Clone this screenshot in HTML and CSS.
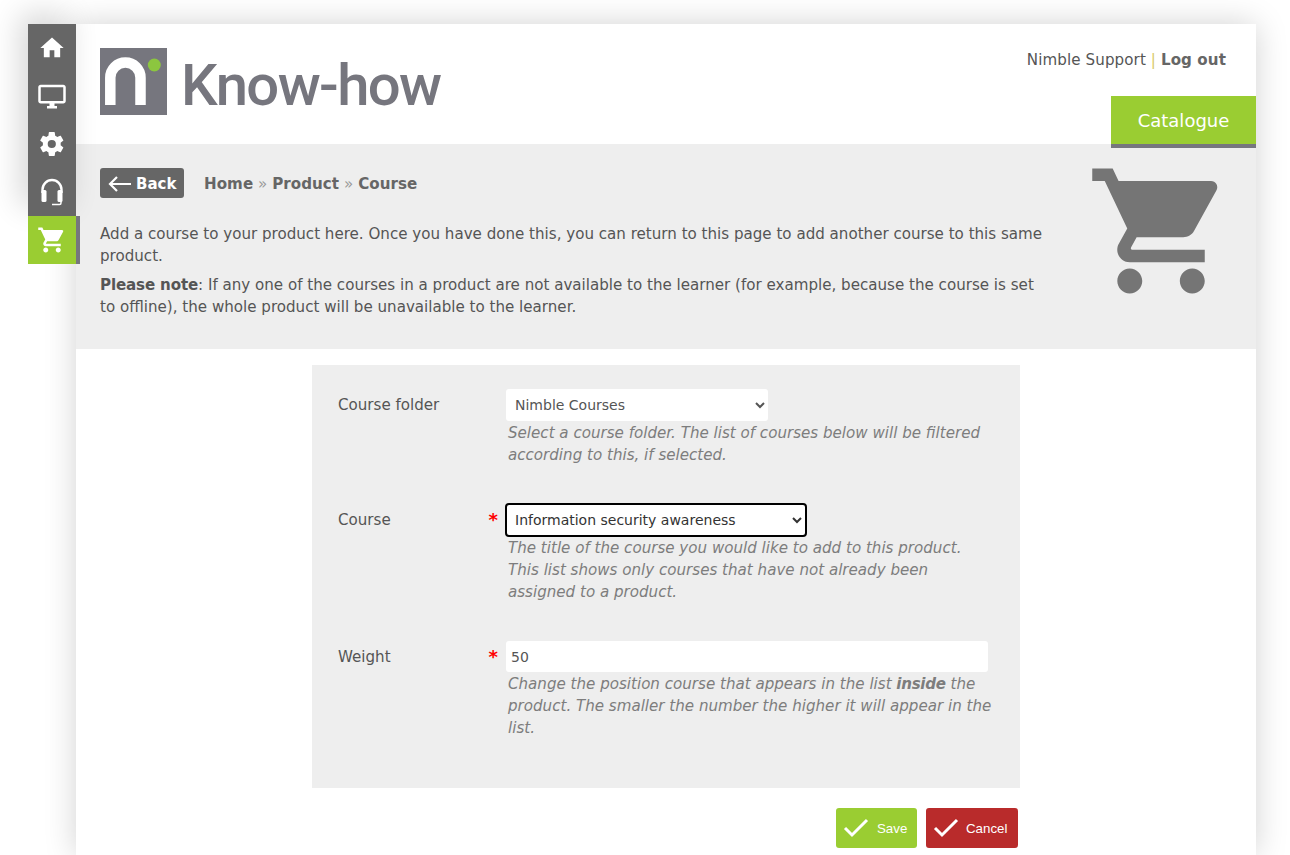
FILE: index.html
```html
<!DOCTYPE html>
<html lang="en">
<head>
<meta charset="utf-8">
<title>Know-how</title>
<link rel="stylesheet" href="styles.css">
</head>
<body>
<div class="shell">
  <nav class="side">
    <div class="side-group">
      <a class="side-item"><svg width="28" height="28" viewBox="0 0 24 24"><path fill="#fff" d="M10 20v-6h4v6h5v-8h3L12 3 2 12h3v8z"/></svg></a>
      <a class="side-item"><svg width="30" height="30" viewBox="0 0 24 24"><path fill="#fff" d="M21 3H3c-1.100 0-2 .9-2 2v11c0 1.100.9 2 2 2h7v2H8v2h8v-2h-2v-2h7c1.100 0 2-.9 2-2V5c0-1.100-.9-2-2-2zm0 13H3V5h18z"/></svg></a>
      <a class="side-item"><svg width="28" height="28" viewBox="0 0 24 24"><path fill="#fff" d="M19.400 13c.04-.32.06-.66.06-1s-.02-.68-.07-1l2.160-1.680c.19-.15.240-.42.120-.64l-2.040-3.540c-.12-.22-.38-.3-.62-.22l-2.540 1.020c-.53-.4-1.100-.74-1.720-1l-.38-2.700A.5.5 0 0 0 13.860 1.800H9.780a.5.5 0 0 0-.5.430L8.900 4.940c-.62.26-1.200.6-1.720 1L4.640 4.920c-.23-.09-.5 0-.62.22L1.980 8.680c-.13.220-.07.490.12.640L4.260 11c-.05.320-.08.670-.08 1s.02.680.07 1l-2.150 1.680c-.19.150-.240.420-.12.640l2.040 3.540c.12.220.380.300.620.220l2.540-1.020c.53.400 1.100.74 1.720 1l.38 2.700c.05.250.25.430.5.430h4.080c.25 0 .46-.18.500-.43l.38-2.700c.62-.26 1.200-.6 1.720-1l2.540 1.020c.23.090.5 0 .62-.22l2.040-3.540c.12-.22.070-.49-.12-.64zM11.820 15.500a3.500 3.500 0 1 1 0-7 3.500 3.500 0 0 1 0 7z"/></svg></a>
      <a class="side-item"><svg width="24" height="30" viewBox="0 0 24 30"><path fill="none" stroke="#fff" stroke-width="2.400" d="M2.500 16v-3.500a9.500 9.500 0 0 1 19 0V16"/><rect x="1.500" y="13" width="5" height="12" rx="1.500" fill="#fff"/><rect x="17.500" y="13" width="5" height="12" rx="1.500" fill="#fff"/><path fill="none" stroke="#fff" stroke-width="1.500" d="M21 24v2a1.500 1.500 0 0 1-1.500 1.500H12"/></svg></a>
    </div>
    <a class="side-item side-active"><svg width="30" height="30" viewBox="0 0 24 24"><path fill="#fff" d="M7 18c-1.100 0-1.990.9-1.990 2S5.900 22 7 22s2-.9 2-2-.9-2-2-2zM1 2v2h2l3.600 7.590-1.350 2.450c-.16.280-.25.610-.25.960 0 1.100.9 2 2 2h12v-2H7.420c-.14 0-.25-.11-.25-.25l.03-.12.9-1.630h7.450c.75 0 1.410-.41 1.750-1.030l3.580-6.490A1 1 0 0 0 20 4H5.210l-.94-2zm16 16c-1.100 0-1.990.9-1.990 2s.89 2 1.990 2 2-.9 2-2-.9-2-2-2z"/></svg></a>
  </nav>
  <div class="page">
    <header class="top">
      <div class="logo">
        <svg class="logo-mark" width="67" height="67" viewBox="0 0 67 67"><rect width="67" height="67" fill="#76767e"/><path fill="none" stroke="#fff" stroke-width="10.500" d="M10.300 57V29.700a15.100 15.100 0 0 1 30.200 0V57"/><circle cx="54.300" cy="17" r="6.500" fill="#8cc63f"/></svg>
        <span class="logo-text">Know-how</span>
      </div>
      <div class="top-right">
        <div class="user-links">Nimble Support <span class="sep">|</span> <b>Log out</b></div>
        <div class="tab">Catalogue</div>
      </div>
    </header>
    <section class="hero">
      <div class="hero-text">
        <div class="crumbs">
          <a class="back"><svg width="24" height="16" viewBox="0 0 24 16"><path fill="none" stroke="#fff" stroke-width="2.200" d="M23 8H2M9 1 2 8l7 7"/></svg>Back</a>
          <span class="trail"><b>Home</b> <i>»</i> <b>Product</b> <i>»</i> <b>Course</b></span>
        </div>
        <p>Add a course to your product here. Once you have done this, you can return to this page to add another course to this same product.</p>
        <p><b class="note">Please note</b>: If any one of the courses in a product are not available to the learner (for example, because the course is set to offline), the whole product will be unavailable to the learner.</p>
      </div>
      <svg class="hero-cart" width="150" height="150" viewBox="0 0 24 24"><path fill="#757575" d="M7 18c-1.100 0-1.990.9-1.990 2S5.900 22 7 22s2-.9 2-2-.9-2-2-2zM1 2v2h2l3.600 7.590-1.350 2.450c-.16.280-.25.610-.25.960 0 1.100.9 2 2 2h12v-2H7.420c-.14 0-.25-.11-.25-.25l.03-.12.9-1.630h7.450c.75 0 1.410-.41 1.750-1.030l3.580-6.490A1 1 0 0 0 20 4H5.210l-.94-2zm16 16c-1.100 0-1.990.9-1.990 2s.89 2 1.990 2 2-.9 2-2-.9-2-2-2z"/></svg>
    </section>
    <main class="content">
      <form class="panel">
        <div class="field">
          <label class="lbl">Course folder</label>
          <div class="ctrl">
            <select class="input sel-folder"><option>Nimble Courses</option></select>
            <div class="help">Select a course folder. The list of courses below will be filtered according to this, if selected.</div>
          </div>
        </div>
        <div class="field">
          <label class="lbl">Course<span class="req">*</span></label>
          <div class="ctrl">
            <select class="input sel-course"><option>Information security awareness</option></select>
            <div class="help">The title of the course you would like to add to this product. This list shows only courses that have not already been assigned to a product.</div>
          </div>
        </div>
        <div class="field">
          <label class="lbl">Weight<span class="req">*</span></label>
          <div class="ctrl">
            <input class="input txt" type="text" value="50">
            <div class="help">Change the position course that appears in the list <b>inside</b> the product. The smaller the number the higher it will appear in the list.</div>
          </div>
        </div>
      </form>
      <div class="actions">
        <a class="btn btn-save"><svg width="26" height="20" viewBox="0 0 26 20"><path fill="none" stroke="#fff" stroke-width="3" d="M2 10l7 7L24 2"/></svg>Save</a>
        <a class="btn btn-cancel"><svg width="26" height="20" viewBox="0 0 26 20"><path fill="none" stroke="#fff" stroke-width="3" d="M2 10l7 7L24 2"/></svg>Cancel</a>
      </div>
    </main>
  </div>
</div>
</body>
</html>
```
FILE: styles.css
```css
* { box-sizing: border-box; }
html, body { margin: 0; height: 855px; overflow: hidden; background: #fff; }
body { font-family: "DejaVu Sans", Verdana, sans-serif; font-size: 15.100px; color: #555; }
.shell { display: flex; align-items: flex-start; margin: 24px 0 0 28px; }
.side { width: 48px; flex: none; position: relative; z-index: 2; }
.side-group { background: #666; box-shadow: -8px -10px 30px rgba(0,0,0,.16); }
.side-item { display: flex; align-items: center; justify-content: center; height: 48px; }
.side-active { background: #9acd32; width: 52px; border-right: 4px solid #76767e; position: relative; }
.page { width: 1180px; height: 831px; background: #fff; box-shadow: 0 0 30px rgba(0,0,0,.18); }
.top { height: 120px; display: flex; justify-content: space-between; background: #fff; }
.logo { display: flex; align-items: center; gap: 14px; padding: 24px 0 29px 24px; height: 120px; }
.logo-mark { flex: none; }
.logo-text { font-family: Roboto, sans-serif; font-size: 58px; color: #76767e; font-weight: 500; letter-spacing: -1.600px; line-height: 67px; position: relative; top: 4px; }
.top-right { display: flex; flex-direction: column; align-items: flex-end; }
.user-links { margin: 26px 30px 0 0; line-height: 20px; letter-spacing: .1px; }
.user-links b { color: #666; }
.sep { color: #d8c96a; }
.tab { margin-top: 26px; width: 145px; height: 52px; line-height: 50px; text-align: center; background: #9acd32; border-bottom: 4px solid #76767e; color: #fff; font-size: 18px; position: relative; z-index: 1; }
.hero { height: 205px; background: #eee; padding: 24px 24px 0 24px; display: flex; justify-content: space-between; align-items: flex-start; }
.hero-text { width: 948px; }
.hero p { margin: 0 0 7px; line-height: 22px; }
.note { letter-spacing: -.15px; }
.crumbs { display: flex; align-items: center; gap: 20px; height: 30px; margin-bottom: 25px; }
.back { display: flex; align-items: center; gap: 4px; height: 30px; width: 84px; padding-left: 8px; padding-top: 1px; background: #666; border-radius: 3px; color: #fff; font-weight: bold; font-size: 15px; }
.trail { padding-top: 2px; letter-spacing: .05px; color: #666; }
.trail i { font-style: normal; color: #999; }
.hero-cart { margin: -12px -4px 0 0; }
.content { padding: 16px 0 0 236px; }
.panel { width: 708px; height: 423px; background: #eee; padding: 24px 26px; }
.field { display: flex; margin-bottom: 38px; }
.lbl { width: 168px; flex: none; position: relative; line-height: 32px; }
.req { position: absolute; right: 8px; top: 0; color: #f00; font-size: 18px; font-weight: bold; }
.ctrl { width: 490px; }
.input { display: block; height: 32px; border: 0; border-radius: 3px; background: #fff; font-family: inherit; font-size: 14px; color: #555; padding: 0 5px; }
.sel-folder { width: 262px; }
.sel-course { width: 302px; height: 34px; margin: -1px 0 -1px -1px; border: 2px solid #000; border-radius: 4px; color: #333; padding: 0 4px; }
.txt { width: 482px; height: 31px; }
.help { font-style: italic; color: #7d7d7d; line-height: 22px; padding: 1px 2px 0; }
.help b { letter-spacing: -.3px; }
.actions { width: 708px; display: flex; justify-content: flex-end; gap: 9px; padding: 20px 2px 0 0; }
.btn { display: flex; align-items: center; gap: 7px; height: 40px; padding-left: 7px; border-radius: 3px; color: #fff; font-family: "Liberation Sans", Arial, sans-serif; font-size: 13.300px; }
.btn-save { width: 81px; background: #9acd32; gap: 8px; }
.btn-cancel { width: 92px; background: #b92b2b; }
```
